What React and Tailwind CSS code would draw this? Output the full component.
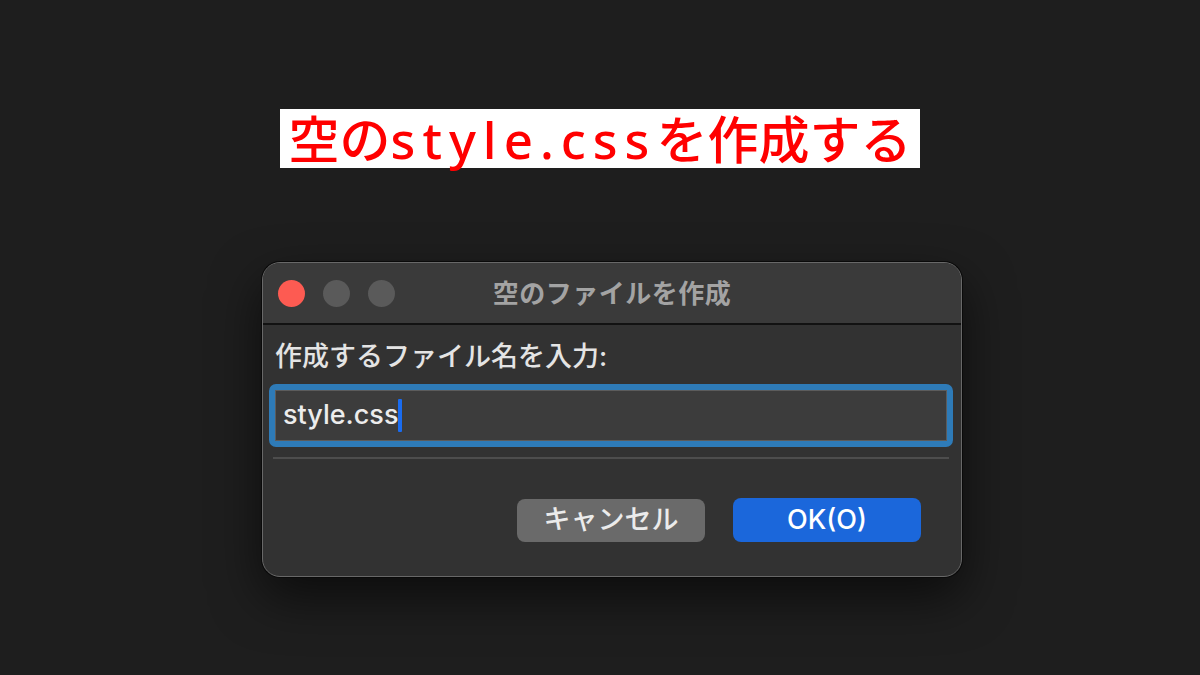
import React from 'react';

const jp = "font-['Inter','Noto_Sans_CJK_JP',sans-serif]";

function TrafficLights() {
  return (
    <div className="flex items-center gap-[18px] pl-[15px]">
      <span className="w-[27px] h-[27px] rounded-full bg-[#fd5b52]" />
      <span className="w-[27px] h-[27px] rounded-full bg-[#5a5a5a]" />
      <span className="w-[27px] h-[27px] rounded-full bg-[#5a5a5a]" />
    </div>
  );
}

export default function App() {
  return (
    <div className={`w-[1200px] h-[675px] bg-[#1e1e1e] flex flex-col items-center ${jp}`}>
      {/* 見出し */}
      <div className="mt-[109px] w-[640px] h-[59px] bg-white flex items-center justify-center">
        <h1 className="text-[#ff0000] text-[51px] leading-none font-['Noto_Sans_CJK_JP',sans-serif] font-medium whitespace-nowrap">
          空の<span className="tracking-[7px] font-['Noto_Sans','Noto_Sans_CJK_JP',sans-serif]">style.css</span>を作成する
        </h1>
      </div>

      {/* ダイアログ */}
      <div className="mt-[94px] ml-[24px] w-[700px] h-[315px] rounded-[18px] border border-[#686868] bg-[#323232] overflow-hidden flex flex-col shadow-[0_0_0_1px_#0a0a0a,0_20px_50px_rgba(0,0,0,0.6)]">
        <div className="h-[62px] shrink-0 bg-[#3a3a3a] border-b-2 border-[#121212] grid grid-cols-[1fr_auto_1fr] items-center">
          <TrafficLights />
          <h2 className="text-[26px] font-bold text-[#a3a3a3] tracking-[0.5px]">空のファイルを作成</h2>
          <div />
        </div>

        <div className="flex-1 flex flex-col pl-[6px] pr-[8px] pt-[17px]">
          <label className="text-[27px] leading-[30px] font-medium text-[#e4e4e4] pl-[6px]">作成するファイル名を入力:</label>

          <div className="mt-[12px] h-[63px] border-[6px] border-[#2e7bb8] rounded-[7px]">
            <div className="h-full border border-[#5c5c5c] bg-[#3c3c3c] flex items-center pl-[7px]">
              <span className="text-[27px] text-[#ececec] font-medium">style.css</span>
              <span className="w-[4px] h-[33px] bg-[#1a6cf0] rounded-[1px]" />
            </div>
          </div>

          <div className="mt-[10px] ml-[4px] mr-[4px] h-[2px] bg-[#4d4d4d]" />

          <div className="mt-[39px] flex justify-end items-start gap-[28px] pr-[32px]">
            <button className="w-[188px] h-[43px] mt-[1px] rounded-[8px] bg-[#6a6a6a] text-[27px] font-medium text-[#ebebeb] flex items-center justify-center">
              キャンセル
            </button>
            <button className="w-[188px] h-[44px] rounded-[8px] bg-[#1b67db] text-[27px] font-medium text-white flex items-center justify-center">
              OK(O)
            </button>
          </div>
        </div>
      </div>
    </div>
  );
}
